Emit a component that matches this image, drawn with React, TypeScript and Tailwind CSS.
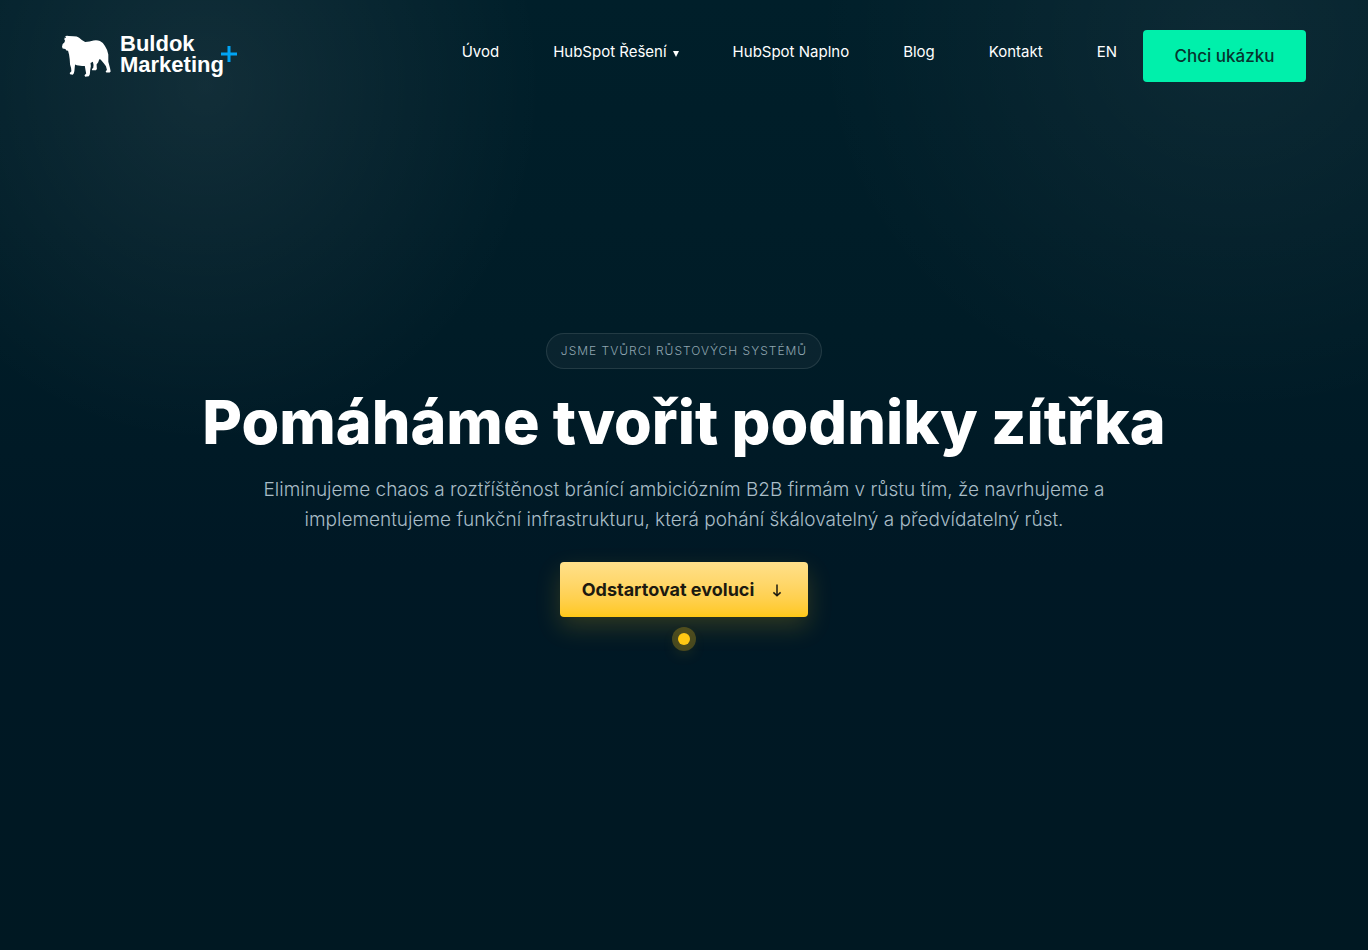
const navItems = [
  { label: 'Úvod', href: '#uvod' },
  { label: 'HubSpot Řešení', href: '#reseni', hasMenu: true },
  { label: 'HubSpot Naplno', href: '#naplno' },
  { label: 'Blog', href: '#blog' },
  { label: 'Kontakt', href: '#kontakt' },
  { label: 'EN', href: '#en' },
];

function BulldogMark() {
  return (
    <svg viewBox="18 15 146 123" className="mt-[2px] h-[42px] w-[49px]" fill="#fff" aria-hidden="true">
      <path d="M26 22L29 17Q33 15 38 17L52 18Q63 18 69 22L77 29L87 35L100 33L112 30Q123 28 131 32Q141 36 146 47Q153 57 156 72L156 94L161 112L163 123L160 126L150 126L148 122L152 118L149 107L143 99L133 87L129 86L126 95L121 102L122 115L119 119L108 119L107 115L111 112L112 103L110 94L103 97L104 107L102 118L101 131L98 137L87 138L85 134L90 129L88 118L86 106L78 106L62 104L57 102L56 110L55 121L53 129L50 132L42 131L41 127L46 122L45 112L42 102L41 86L39 72L36 61L31 60L28 56L20 54L18 49L20 41L25 36L27 31L25 27Z" />
      <circle cx="28" cy="21" r="1.6" fill="#0b2631" />
    </svg>
  );
}

function Logo() {
  return (
    <a href="#uvod" className="mt-[3px] flex text-white">
      <BulldogMark />
      <span className="ml-[9px] flex flex-col font-[Liberation_Sans,Arial,sans-serif] text-[22px] leading-[21px] font-bold">
        <span>Buldok</span>
        <span>Marketing</span>
      </span>
      <svg viewBox="0 0 16 16" className="-ml-[3px] mt-[13px] size-4" stroke="#00a4f5" strokeWidth="3" aria-hidden="true">
        <path d="M8 0v16M0 8h16" />
      </svg>
    </a>
  );
}

function Header() {
  return (
    <header className="flex h-28 items-start justify-between px-[62px] pt-[30px]">
      <Logo />
      <div className="flex items-start gap-[26px]">
        <nav className="flex gap-[54px] text-[15px] leading-[44px] text-white">
          {navItems.map((item) => (
            <a key={item.label} href={item.href} className="flex items-center gap-[6px] whitespace-nowrap">
              {item.label}
              {item.hasMenu && (
                <svg viewBox="0 0 6 6" className="mt-1 size-[6px]" fill="currentColor" aria-hidden="true">
                  <path d="M0 0h6L3 6z" />
                </svg>
              )}
            </a>
          ))}
        </nav>
        <button type="button" className="h-[52px] w-[163px] rounded-[4px] bg-[#00f0ab] pt-px text-[17px] font-medium text-[#06352f]">
          Chci ukázku
        </button>
      </div>
    </header>
  );
}

export default function App() {
  return (
    <div className="flex min-h-screen flex-col bg-[radial-gradient(ellipse_340px_360px_at_15%_9%,rgba(255,255,255,0.07),transparent),radial-gradient(ellipse_420px_380px_at_90%_4%,rgba(255,255,255,0.05),transparent),linear-gradient(180deg,#001f2a_0%,#001c27_35%,#001825_60%,#001822_100%)] font-[Inter,sans-serif]">
      <Header />
      <main className="flex flex-1 flex-col items-center justify-center px-6 pb-28 text-center">
        <p className="flex h-9 items-center rounded-full border border-white/10 bg-white/4 px-[14px] text-[12px] font-light tracking-[1px] text-[#8fa5b0] uppercase">
          Jsme tvůrci růstových systémů
        </p>
        <h1 className="mt-4 text-[61px] leading-[74px] font-extrabold text-white">
          Pomáháme tvořit podniky zítřka
        </h1>
        <p className="mt-4 max-w-[860px] text-[19px] leading-[30px] font-light text-[#a9bdc7]">
          Eliminujeme chaos a roztříštěnost bránící ambiciózním B2B firmám v růstu tím, že navrhujeme a
          implementujeme funkční infrastrukturu, která pohání škálovatelný a předvídatelný růst.
        </p>
        <div className="relative mt-[27px]">
          <a
            href="#evoluce"
            className="flex h-[55px] items-center gap-4 rounded-[4px] bg-linear-to-b from-[#ffe08a] to-[#ffc814] pr-6 pl-[22px] text-[18px] font-bold text-[#1c1a10] shadow-[0_10px_24px_rgba(255,200,20,0.18)]"
          >
            Odstartovat evoluci
            <svg viewBox="0 0 14 14" className="size-[14px]" fill="none" stroke="currentColor" strokeWidth="1.5" aria-hidden="true">
              <path d="M7 1.5v11M3.4 9.4L7 12.8l3.6-3.4" />
            </svg>
          </a>
          <span className="absolute top-[71px] left-1/2 size-3 -translate-x-1/2 rounded-full bg-[#ffc814] shadow-[0_0_0_6px_rgba(255,200,20,0.25),0_6px_16px_rgba(255,200,20,0.25)]" />
        </div>
      </main>
    </div>
  );
}
